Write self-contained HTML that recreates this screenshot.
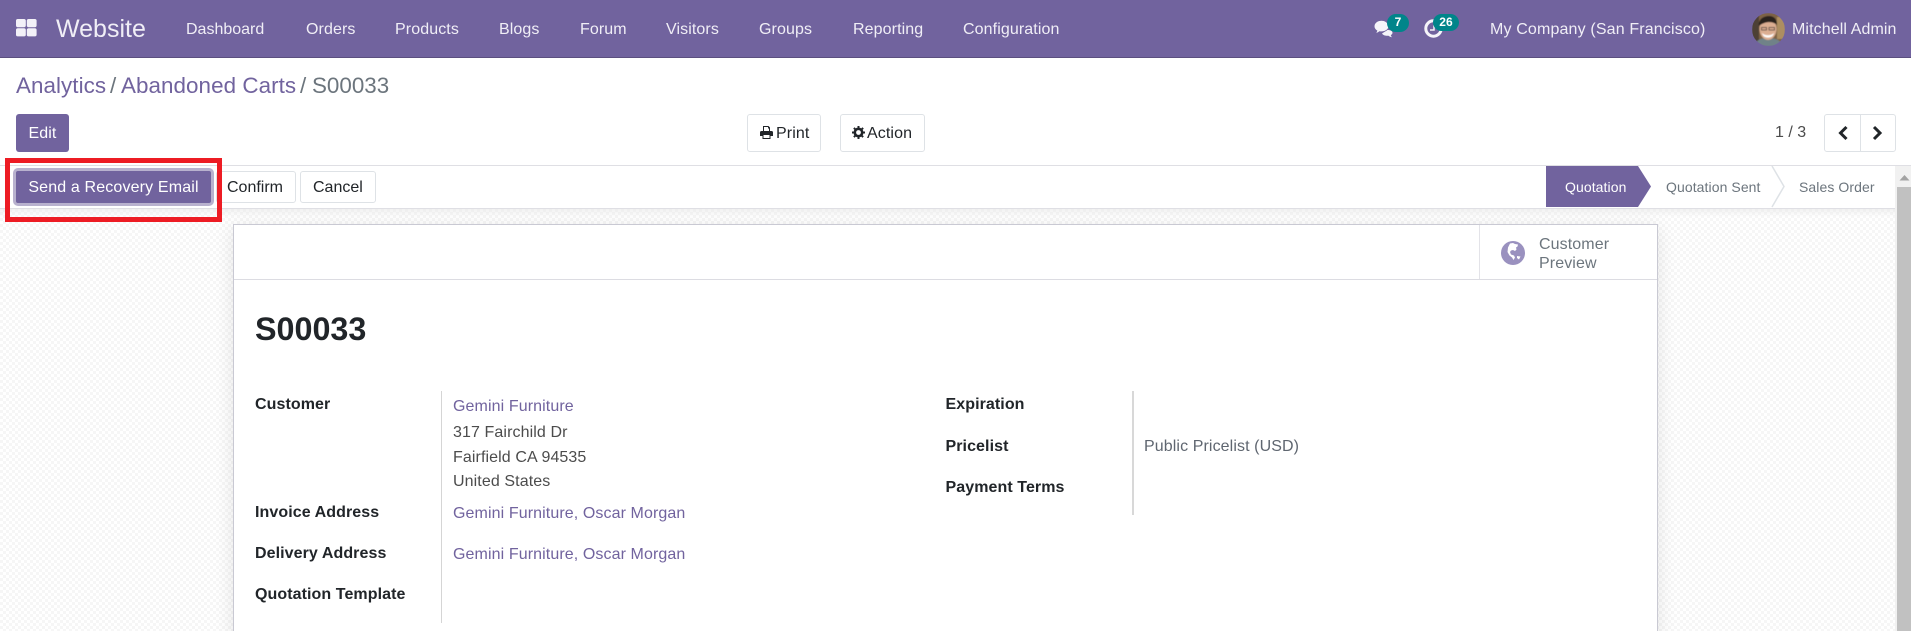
<!DOCTYPE html>
<html><head><meta charset="utf-8"><title>S00033</title>
<style>
html,body{margin:0;padding:0;width:1911px;height:631px;overflow:hidden;background:#fff;}
body{font-family:"Liberation Sans",Arial,sans-serif;font-size:16px;letter-spacing:.1px;color:#212529;position:relative;}
.a{position:absolute;white-space:nowrap;line-height:20px;}
.nav{position:absolute;left:0;top:0;width:1911px;height:57px;background:#71639e;border-bottom:1px solid #5b4f7f;}
.m{color:#f0eef6;top:20px;}
.btn{position:absolute;box-sizing:border-box;border:1px solid #dee2e6;border-radius:3px;background:#fff;}
.l{font-weight:bold;color:#212529;letter-spacing:.08px;}
.lnk{color:#71639e;}
.v{color:#4c4c4c;}
.bc{top:73px;font-size:22.4px;line-height:26px;letter-spacing:.06px;}
.s{top:177px;font-size:14px;letter-spacing:.08px;}
.bg{position:absolute;left:0;top:209px;width:1896px;height:422px;
background-color:#fff;background-image:conic-gradient(#f6f6f6 25%,#fff 25% 50%,#f6f6f6 50% 75%,#fff 75%);background-size:6px 6px;}
.bgs{position:absolute;left:0;top:209px;width:1896px;height:8px;background:linear-gradient(rgba(232,232,232,.6),rgba(240,240,240,0));}
.sheet{position:absolute;left:233px;top:224px;width:1425px;height:420px;box-sizing:border-box;background:#fff;border:1px solid #c9c9d3;box-shadow:0 4px 18px rgba(0,0,0,.1);}
</style></head><body>
<div class="nav"></div>
<svg class="a" style="left:16px;top:19px" width="21" height="18" viewBox="0 0 21 18" fill="#f3f1f8"><rect width="9.800" height="8.200" rx="1.800"/><rect x="10.800" width="9.800" height="8.200" rx="1.800"/><rect y="9.200" width="9.800" height="8.200" rx="1.800"/><rect x="10.800" y="9.200" width="9.800" height="8.200" rx="1.800"/></svg>
<div class="a m" style="left:56px;top:15px;font-size:25px;line-height:28px;letter-spacing:0;">Website</div>
<div class="a m" style="left:186px;letter-spacing:0;">Dashboard</div>
<div class="a m" style="left:306px;">Orders</div>
<div class="a m" style="left:395px;">Products</div>
<div class="a m" style="left:499px;">Blogs</div>
<div class="a m" style="left:580px;">Forum</div>
<div class="a m" style="left:666px;">Visitors</div>
<div class="a m" style="left:759px;">Groups</div>
<div class="a m" style="left:853px;">Reporting</div>
<div class="a m" style="left:963px;">Configuration</div>

<svg class="a" style="left:1374px;top:20px" width="20" height="18" viewBox="0 0 20 18"><path d="M13.500 10c2.500 0 5 .8 5 2.800 0 1-.7 1.800-1.700 2.300.2.800.6 1.500 1.200 2.100-1.400-.2-2.600-.7-3.500-1.500-2.500.3-5.500-.3-6.500-2.200z" fill="#f5f4f9"/><path d="M7.500.5C3.400.5.200 3 .2 6.300c0 1.900 1.100 3.500 2.800 4.500-.3 1-.9 1.900-1.700 2.600 1.600-.2 3.200-.9 4.400-1.900.6.100 1.200.2 1.800.2 4 0 7.200-2.300 7.200-5.400S11.500.5 7.500.5z" fill="#f5f4f9" stroke="#71639e" stroke-width=".6"/></svg>
<div class="a" style="left:1387px;top:14px;width:22px;height:18px;background:#00858a;border-radius:9px;color:#fff;font-weight:bold;font-size:12px;line-height:17px;text-align:center;">7</div>
<svg class="a" style="left:1424px;top:19px" width="19" height="19" viewBox="0 0 19 19"><circle cx="9.500" cy="9.500" r="7.700" fill="none" stroke="#f5f4f9" stroke-width="3"/><path d="M10 6v5H6" fill="none" stroke="#f5f4f9" stroke-width="1.500"/></svg>
<div class="a" style="left:1433px;top:14px;width:26px;height:17px;background:#00858a;border-radius:9px;color:#fff;font-weight:bold;font-size:12px;line-height:16px;text-align:center;">26</div>

<div class="a m" style="left:1490px;letter-spacing:.15px;">My Company (San Francisco)</div>
<svg class="a" style="left:1752px;top:13px" width="33" height="33" viewBox="0 0 33 33"><defs><clipPath id="c"><circle cx="16.500" cy="16.500" r="16.500"/></clipPath><filter id="b"><feGaussianBlur stdDeviation=".6"/></filter></defs><g clip-path="url(#c)"><g filter="url(#b)"><rect width="33" height="33" fill="#7d6244"/><rect x="0" y="0" width="7" height="33" fill="#4d4036"/><rect x="25" y="4" width="8" height="22" fill="#ad8e60"/><path d="M3 33c1-7 7-8 13-8s13 1 14 8z" fill="#6f8288"/><ellipse cx="16" cy="16" rx="8.500" ry="11" fill="#dcae92"/><path d="M7 13c-1-7 5-10 10-10s8 3 8 9c-4-4-12-4-18 1z" fill="#2c211b"/><path d="M9.500 14.500h5v2.500h-5zM17 14.500h5.500v2.500H17z" fill="none" stroke="#3a3030" stroke-width=".7"/><path d="M10 20c3 3 9 3 12 0-1 3.500-3 4.500-6 4.500s-5-1-6-4.500z" fill="#fff"/></g></g></svg>
<div class="a m" style="left:1792px;">Mitchell Admin</div>

<div class="a bc" style="left:16px;color:#71639e;">Analytics</div>
<div class="a bc" style="left:110px;color:#6c757d;">/</div>
<div class="a bc" style="left:121px;color:#71639e;">Abandoned Carts</div>
<div class="a bc" style="left:300px;color:#6c757d;">/</div>
<div class="a bc" style="left:312px;color:#6c757d;letter-spacing:0;">S00033</div>

<div class="a" style="left:16px;top:114px;width:53px;height:38px;background:#71639e;border-radius:3px;color:#fff;text-align:center;line-height:39px;">Edit</div>

<div class="btn" style="left:747px;top:114px;width:74px;height:38px;"></div>
<svg class="a" style="left:760px;top:126px" width="13" height="13" viewBox="0 0 13 13" fill="#212529"><path d="M3 0h5.500L10 1.500V5H9V2.500H8V1H4v4H3z"/><path d="M1.500 5h10A1.500 1.500 0 0 1 13 6.500V10h-2.500v3h-8v-3H0V6.500A1.500 1.500 0 0 1 1.500 5zM3.500 9v3h6V9z"/></svg>
<div class="a" style="left:776px;top:124px">Print</div>
<div class="btn" style="left:840px;top:114px;width:85px;height:38px;"></div>
<svg class="a" style="left:852px;top:126px" width="13" height="13" viewBox="0 0 13 13"><circle cx="6.500" cy="6.500" r="3.700" fill="none" stroke="#212529" stroke-width="2.600"/><path d="M6.500 0v13M0 6.500h13M1.900 1.900l9.200 9.200M11.100 1.900l-9.200 9.200" stroke="#212529" stroke-width="2" stroke-dasharray="2.300 8.400 2.300"/></svg>
<div class="a" style="left:867px;top:124px">Action</div>

<div class="a" style="left:1775px;top:123px;color:#4c4c4c;letter-spacing:0;">1 / 3</div>
<div class="btn" style="left:1824px;top:114px;width:72px;height:38px;"></div>
<div class="a" style="left:1860px;top:115px;width:1px;height:36px;background:#dee2e6;"></div>
<svg class="a" style="left:1837px;top:125px" width="12" height="16" viewBox="0 0 12 16"><path d="M9.500 2L3.500 8l6 6" fill="none" stroke="#212529" stroke-width="3"/></svg>
<svg class="a" style="left:1871px;top:125px" width="12" height="16" viewBox="0 0 12 16"><path d="M3 2l6 6-6 6" fill="none" stroke="#212529" stroke-width="3"/></svg>

<div class="a" style="left:0;top:165px;width:1911px;height:1px;background:#dfdfe4;"></div>
<div class="bg"></div><div class="bgs"></div>
<div class="a" style="left:0;top:208px;width:1896px;height:1px;background:#dfdfe4;"></div>

<div class="a" style="left:13px;top:168px;box-sizing:border-box;width:201px;height:38px;background:#71639e;border:3px solid #b8b1ce;border-radius:5px;color:#fff;text-align:center;line-height:33px;letter-spacing:.15px;">Send a Recovery Email</div>
<div class="btn" style="left:216px;top:171px;width:80px;height:32px;"></div>
<div class="a" style="left:227px;top:178px;letter-spacing:0;">Confirm</div>
<div class="btn" style="left:300px;top:171px;width:76px;height:32px;"></div>
<div class="a" style="left:313px;top:178px;letter-spacing:0;">Cancel</div>
<div class="a" style="left:5px;top:158px;box-sizing:border-box;width:217px;height:64px;border:5px solid #ed1c24;"></div>

<svg class="a" style="left:1546px;top:166px" width="250" height="42" viewBox="0 0 250 42"><path d="M0 0h92l13 20.500L92 41H0z" fill="#71639e"/><path d="M226 0l12 20.500L226 41" fill="none" stroke="#dee2e6" stroke-width="1.500"/></svg>
<div class="a s" style="left:1565px;color:#fff;">Quotation</div>
<div class="a s" style="left:1666px;color:#6c757d;">Quotation Sent</div>
<div class="a s" style="left:1799px;color:#6c757d;">Sales Order</div>

<div class="sheet"></div>
<div class="a" style="left:234px;top:279px;width:1423px;height:1px;background:#dcdce2;"></div>
<div class="a" style="left:1479px;top:225px;width:1px;height:54px;background:#e3e3e8;"></div>
<svg class="a" style="left:1501px;top:241px" width="24" height="24" viewBox="0 0 24 24"><circle cx="12" cy="12" r="12" fill="#9a91bf"/><path d="M9 2.500l3-.5 2 1 3 .5-.5 2-1.500 1 .5 2-1.500 1.500-2-1-2 .5-1 1.500 1 2.500 3 1 1 2-1.500 2.500-1.500-2.500-2.500-2-2-3.500L7 6.500z" fill="#fff"/><path d="M16 15l3.500.5-1.500 3-2-1.500z" fill="#fff"/></svg>
<div class="a" style="left:1539px;top:235px;color:#6c757d;">Customer</div>
<div class="a" style="left:1539px;top:254px;color:#6c757d;">Preview</div>

<div class="a" style="left:255px;top:311px;font-size:32.3px;line-height:36px;font-weight:bold;letter-spacing:0;">S00033</div>

<div class="a l" style="left:255px;top:395px">Customer</div>
<div class="a l" style="left:255px;top:503px">Invoice Address</div>
<div class="a l" style="left:255px;top:544px">Delivery Address</div>
<div class="a l" style="left:255px;top:585px">Quotation Template</div>
<div class="a" style="left:441px;top:391px;width:1px;height:232px;background:#d5d5d5;"></div>
<div class="a lnk" style="left:453px;top:397px">Gemini Furniture</div>
<div class="a v" style="left:453px;top:423px">317 Fairchild Dr</div>
<div class="a v" style="left:453px;top:448px">Fairfield CA 94535</div>
<div class="a v" style="left:453px;top:472px">United States</div>
<div class="a lnk" style="left:453px;top:504px">Gemini Furniture, Oscar Morgan</div>
<div class="a lnk" style="left:453px;top:545px">Gemini Furniture, Oscar Morgan</div>

<div class="a l" style="left:945.500px;top:395px">Expiration</div>
<div class="a l" style="left:945.500px;top:437px">Pricelist</div>
<div class="a l" style="left:945.500px;top:478px">Payment Terms</div>
<div class="a" style="left:1132px;top:391px;width:2px;height:124px;background:#d8d8d8;"></div>
<div class="a v" style="left:1144px;top:437px;color:#5f6670;">Public Pricelist (USD)</div>

<div class="a" style="left:1895px;top:166px;width:16px;height:465px;background:#f1f1f1;"></div>
<div class="a" style="left:1897px;top:187px;width:14px;height:444px;background:#c1c1c1;"></div>
<svg class="a" style="left:1897px;top:172px" width="14" height="12" viewBox="0 0 14 12"><path d="M2.500 8.500L7.500 3l5 5.500z" fill="#a3a3a3"/></svg>
</body></html>
